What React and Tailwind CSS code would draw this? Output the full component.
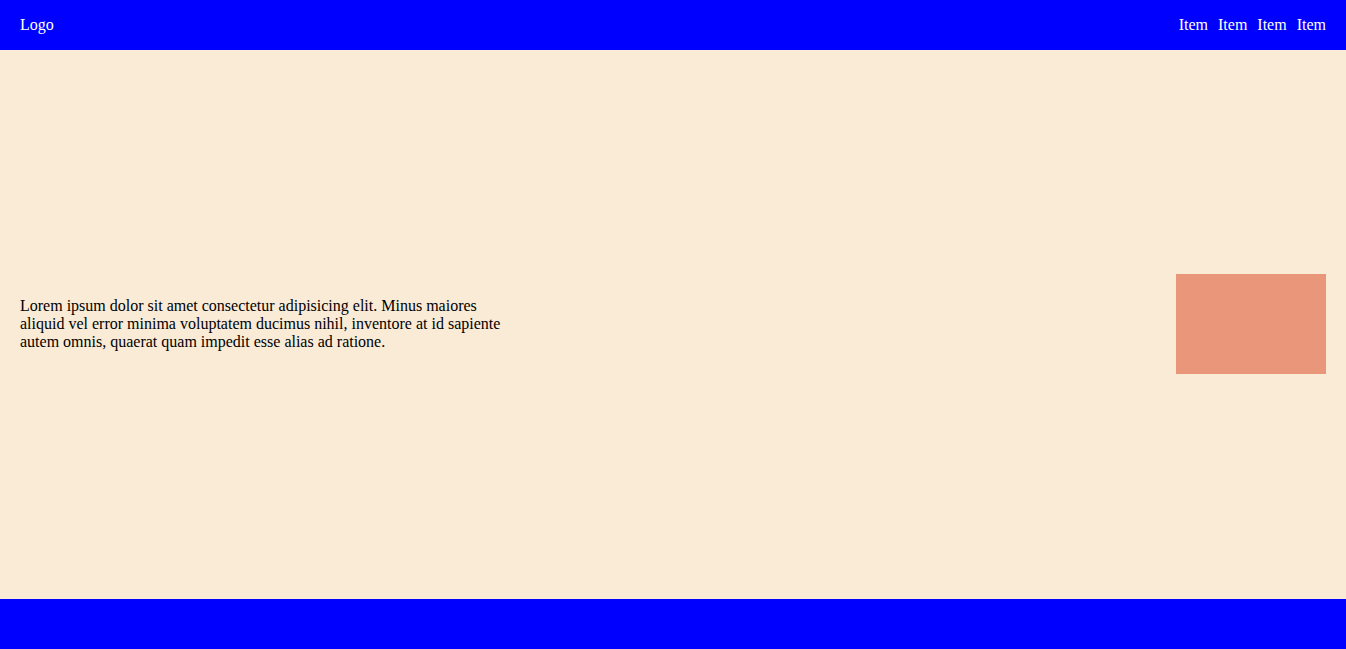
import React from 'react';

const App = () => {
    return (
        <div className="flex flex-col h-screen font-['Liberation_Serif',serif] text-base leading-[18px]">
            {/* Header */}
            <header className="h-[50px] shrink-0 bg-[#0000ff] text-white flex items-center justify-between px-5">
                <div>Logo</div>
                <nav className="flex gap-[10px]">
                    <span>Item</span>
                    <span>Item</span>
                    <span>Item</span>
                    <span>Item</span>
                </nav>
            </header>

            {/* Main */}
            <main className="flex-1 bg-[#faebd7] flex items-center justify-between px-5 pb-px">
                <p className="w-[500px] text-black">
                    Lorem ipsum dolor sit amet consectetur adipisicing elit. Minus maiores aliquid vel error minima voluptatem ducimus nihil, inventore at id sapiente autem omnis, quaerat quam impedit esse alias ad ratione.
                </p>
                <div className="w-[150px] h-[100px] bg-[#e9967a]" />
            </main>

            {/* Footer */}
            <footer className="h-[50px] shrink-0 bg-[#0000ff]" />
        </div>
    );
};

export default App;
